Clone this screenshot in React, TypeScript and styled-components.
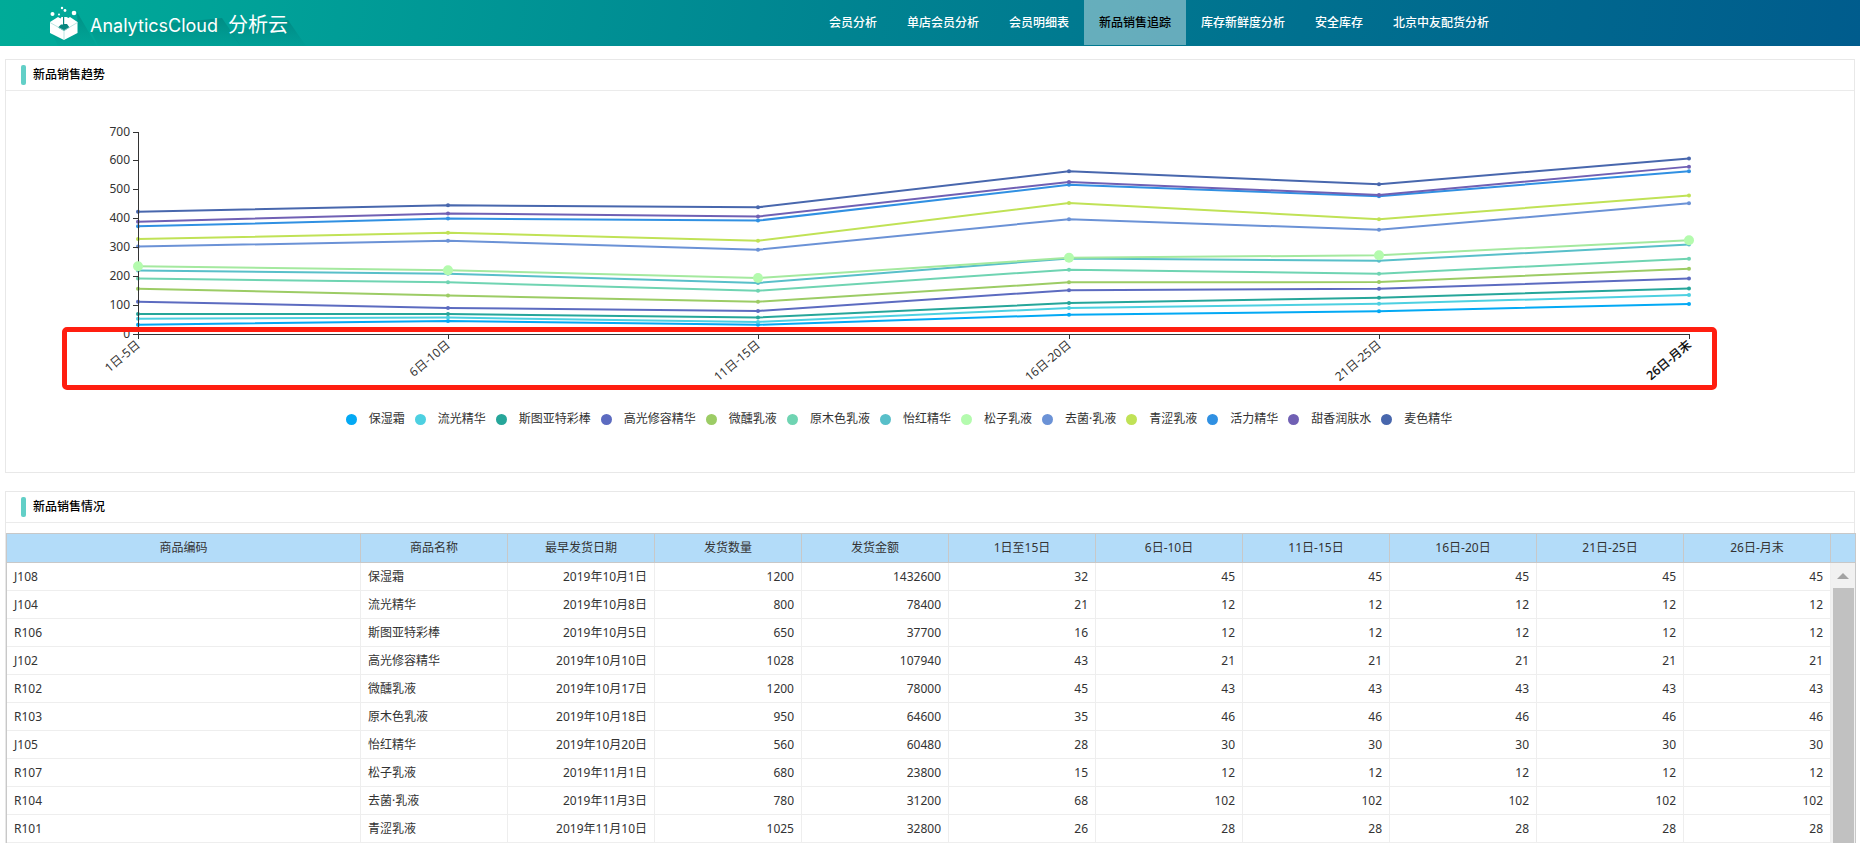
import React, { useLayoutEffect, useRef, useState } from "react";
import styled, { createGlobalStyle } from "styled-components";

const GlobalStyle = createGlobalStyle`
  * { box-sizing: border-box; }
  body {
    margin: 0;
    background: #fff;
    color: #333;
    font: 12px/16px "Noto Sans", "Noto Sans CJK SC", sans-serif;
  }
`;

const Header = styled.header`
  display: flex;
  justify-content: space-between;
  height: 46px;
  overflow: hidden;
  background: linear-gradient(100deg, #00ab98 0%, #00a198 14%, #008491 45%, #00708f 70%, #005c8d 100%);
`;

const Brand = styled.a`
  position: relative;
  display: flex;
  align-items: center;
  gap: 12px;
  padding-left: 50px;
  color: #fff;
  text-decoration: none;
  white-space: nowrap;
`;

const BrandShadow = styled.svg`
  position: absolute;
  top: 0;
  left: 0;
`;

const BrandMark = styled.svg`
  position: relative;
  flex: none;
`;

const BrandName = styled.span`
  position: relative;
  display: flex;
  align-items: baseline;
  gap: 10px;
  padding-top: 4px;
  font: 18px/24px Inter, "Noto Sans CJK SC", sans-serif;
`;

const BrandNameCn = styled.span`
  font-size: 20px;
`;

const Nav = styled.nav`
  display: flex;
  height: 45px;
  margin-right: 356px;
`;

const NavLink = styled.a<{ $active?: boolean }>`
  display: flex;
  align-items: center;
  padding: 0 15px;
  font-weight: 500;
  white-space: nowrap;
  text-decoration: none;
  color: ${(p) => (p.$active ? "#000" : "#fff")};
  background: ${(p) => (p.$active ? "rgba(255, 255, 255, 0.4)" : "transparent")};
`;

const Main = styled.main`
  display: flex;
  flex-direction: column;
  gap: 18px;
  padding: 13px 5px 0;
`;

const Panel = styled.section<{ $open?: boolean }>`
  border: 1px solid #e8e8e8;
  border-bottom-width: ${(p) => (p.$open ? 0 : 1)}px;
`;

const PanelTitle = styled.h2`
  display: flex;
  align-items: center;
  gap: 7px;
  height: 31px;
  margin: 0;
  padding-left: 15px;
  border-bottom: 1px solid #ebebeb;
  font-size: 12px;
  line-height: 18px;
  font-weight: 500;
  color: #000;

  &::before {
    content: "";
    width: 5px;
    height: 20px;
    border-radius: 2px;
    background: #62cfc7;
  }
`;

const ChartArea = styled.div`
  position: relative;
  height: 381px;
`;

const ChartSvg = styled.svg`
  display: block;
  width: 100%;
  height: 320px;
`;

const AxisText = styled.text<{ $strong?: boolean }>`
  font-size: 12px;
  fill: ${(p) => (p.$strong ? "#000" : "#333")};
  stroke: ${(p) => (p.$strong ? "#000" : "none")};
  stroke-width: 0.3;
  text-anchor: end;
`;

const Highlight = styled.div`
  position: absolute;
  top: 236px;
  left: 56px;
  right: 137px;
  height: 63px;
  border: 5px solid #ff1e10;
  border-radius: 5px;
`;

const Legend = styled.ul`
  display: flex;
  flex-wrap: wrap;
  justify-content: center;
  gap: 10px;
  margin: 0;
  padding: 0 62px 0 0;
  list-style: none;
`;

const LegendItem = styled.li<{ $color: string }>`
  display: flex;
  align-items: center;
  gap: 12px;
  white-space: nowrap;

  &::before {
    content: "";
    width: 11px;
    height: 11px;
    border-radius: 50%;
    background: ${(p) => p.$color};
  }
`;

const TableFrame = styled.div`
  margin: 10px -2px 0 0;
  border: 1px solid #c8c8c8;
  border-bottom: 0;
`;

const Table = styled.table`
  width: 100%;
  table-layout: fixed;
  border-collapse: separate;
  border-spacing: 0;
`;

const Col = styled.col<{ $width?: number }>`
  width: ${(p) => (p.$width ? `${p.$width}px` : "auto")};
`;

const HeadCell = styled.th`
  height: 29px;
  padding: 0 7px;
  border-right: 1px solid #c8c8c8;
  border-bottom: 1px solid #c8c8c8;
  background: #b3dcf9;
  font-weight: 400;
  text-align: center;

  &:last-child { border-right: 0; }
`;

const Cell = styled.td<{ $right?: boolean }>`
  height: 28px;
  padding: 0 7px;
  border-right: 1px solid #eee;
  border-bottom: 1px solid #eee;
  text-align: ${(p) => (p.$right ? "right" : "left")};
  white-space: nowrap;
`;

const ScrollCell = styled.td`
  height: 1px;
  padding: 0;
  background: #f1f1f1;
`;

const ScrollTrack = styled.div`
  display: flex;
  flex-direction: column;
  align-items: center;
  height: 280px;
`;

const ScrollArrow = styled.svg`
  flex: none;
  width: 24px;
  height: 25px;
`;

const ScrollThumb = styled.div`
  flex: 1;
  width: 21px;
  background: #c1c1c1;
`;

const navItems = ["会员分析", "单店会员分析", "会员明细表", "新品销售追踪", "库存新鲜度分析", "安全库存", "北京中友配货分析"];

const periods = ["1日-5日", "6日-10日", "11日-15日", "16日-20日", "21日-25日", "26日-月末"];

const series = [
  { name: "保湿霜", color: "#03a9f4", data: [32, 45, 32, 67, 79, 104] },
  { name: "流光精华", color: "#4dd0e1", data: [53, 57, 42, 90, 105, 135] },
  { name: "斯图亚特彩棒", color: "#26a69a", data: [69, 69, 57, 107, 126, 158] },
  { name: "高光修容精华", color: "#5c6bc0", data: [112, 90, 80, 152, 157, 192] },
  { name: "微醺乳液", color: "#9ccc65", data: [157, 133, 112, 179, 180, 226] },
  { name: "原木色乳液", color: "#6fd4b2", data: [192, 179, 150, 223, 209, 261] },
  { name: "怡红精华", color: "#58bfc9", data: [220, 209, 177, 262, 254, 310] },
  { name: "松子乳液", color: "#b4fbae", line: "#a4e99f", data: [235, 221, 194, 264, 273, 325] },
  { name: "去菌·乳液", color: "#6b92d6", data: [303, 323, 292, 398, 361, 453] },
  { name: "青涩乳液", color: "#c0e256", data: [329, 351, 323, 454, 398, 480] },
  { name: "活力精华", color: "#3090e2", data: [373, 400, 393, 517, 477, 564] },
  { name: "甜香润肤水", color: "#7060b4", data: [389, 418, 407, 527, 482, 580] },
  { name: "麦色精华", color: "#4867ad", data: [424, 446, 439, 564, 519, 608] },
];

const columns = ["商品编码", "商品名称", "最早发货日期", "发货数量", "发货金额", "1日至15日", "6日-10日", "11日-15日", "16日-20日", "21日-25日", "26日-月末"];

const rows: [string, string, string, number, number, number, number][] = [
  ["J108", "保湿霜", "2019年10月1日", 1200, 1432600, 32, 45],
  ["J104", "流光精华", "2019年10月8日", 800, 78400, 21, 12],
  ["R106", "斯图亚特彩棒", "2019年10月5日", 650, 37700, 16, 12],
  ["J102", "高光修容精华", "2019年10月10日", 1028, 107940, 43, 21],
  ["R102", "微醺乳液", "2019年10月17日", 1200, 78000, 45, 43],
  ["R103", "原木色乳液", "2019年10月18日", 950, 64600, 35, 46],
  ["J105", "怡红精华", "2019年10月20日", 560, 60480, 28, 30],
  ["R107", "松子乳液", "2019年11月1日", 680, 23800, 15, 12],
  ["R104", "去菌·乳液", "2019年11月3日", 780, 31200, 68, 102],
  ["R101", "青涩乳液", "2019年11月10日", 1025, 32800, 26, 28],
];

const PLOT = { left: 132, right: 165, top: 41, bottom: 243 };

function TrendChart() {
  const ref = useRef<SVGSVGElement>(null);
  const [width, setWidth] = useState(1848);

  useLayoutEffect(() => {
    const el = ref.current;
    if (!el) return;
    const update = () => setWidth(el.getBoundingClientRect().width);
    update();
    const observer = new ResizeObserver(update);
    observer.observe(el);
    return () => observer.disconnect();
  }, []);

  const end = width - PLOT.right;
  const x = (i: number) => Math.round(PLOT.left + ((end - PLOT.left) * i) / (periods.length - 1));
  const y = (v: number) => PLOT.bottom - (v * (PLOT.bottom - PLOT.top)) / 700;

  return (
    <ChartSvg ref={ref} role="img" aria-label="新品销售趋势">
      {series.map((s) => (
        <g key={s.name} fill={s.line ?? s.color}>
          <polyline
            points={s.data.map((v, i) => `${x(i)},${y(v)}`).join(" ")}
            fill="none"
            stroke={s.line ?? s.color}
            strokeWidth={2}
          />
          {s.data.map((v, i) => (
            <circle key={i} cx={x(i)} cy={y(v)} r={2} />
          ))}
        </g>
      ))}
      <g stroke="#333" shapeRendering="crispEdges">
        <line x1={x(0) + 0.5} x2={x(0) + 0.5} y1={PLOT.top} y2={PLOT.bottom} />
        <line x1={x(0)} x2={end + 1} y1={PLOT.bottom + 0.5} y2={PLOT.bottom + 0.5} />
        {[0, 1, 2, 3, 4, 5, 6, 7].map((n) => {
          const ty = Math.floor(y(n * 100)) + 0.5;
          return <line key={n} x1={x(0) - 5} x2={x(0)} y1={ty} y2={ty} />;
        })}
        {periods.map((p, i) => (
          <line key={p} x1={x(i) + 0.5} x2={x(i) + 0.5} y1={PLOT.bottom} y2={PLOT.bottom + 5} />
        ))}
      </g>
      {series[7].data.map((v, i) => (
        <circle key={i} cx={x(i)} cy={y(v)} r={5} fill="#b4fbae" />
      ))}
      {[0, 1, 2, 3, 4, 5, 6, 7].map((n) => (
        <AxisText key={n} x={x(0) - 8} y={Math.floor(y(n * 100)) + 4}>
          {n * 100}
        </AxisText>
      ))}
      {periods.map((p, i) => (
        <AxisText
          key={p}
          $strong={i === periods.length - 1}
          transform={`translate(${x(i) + 3} ${PLOT.bottom + 12}) rotate(-40)`}
        >
          {p}
        </AxisText>
      ))}
    </ChartSvg>
  );
}

function Logo() {
  return (
    <>
      <BrandShadow width="310" height="46" aria-hidden="true">
        <defs>
          <linearGradient id="fall" x1="0" y1="0" x2="0" y2="1">
            <stop offset="0" stopColor="#00706c" stopOpacity="0.45" />
            <stop offset="1" stopColor="#00807c" stopOpacity="0.06" />
          </linearGradient>
        </defs>
        <path d="M77 12 L97 46 H58 L52 33 L78 33Z" fill="url(#fall)" />
        <path d="M91 31 L222 18 L241 46 H98Z" fill="url(#fall)" />
        <path d="M230 31 L288 20 L306 46 H240Z" fill="url(#fall)" />
      </BrandShadow>
      <BrandMark width="28" height="34" viewBox="0 0 28 34" aria-hidden="true">
        <g fill="#fff">
          <circle cx="2.500" cy="8" r="2" />
          <circle cx="12" cy="2" r="1.200" />
          <circle cx="9" cy="8.500" r="1" />
          <circle cx="15" cy="4.500" r="1.400" />
          <circle cx="24" cy="7" r="2.300" />
          <path d="M0 16 L8 11 L10.500 12.500 L11.500 11 H16.500 L18.500 12 L20 11 L27.500 16 V27 L14 34 L0 27Z" />
        </g>
        <path d="M13 11 H14.200 V18 H17 L19.500 21.500 L14 25 L8 21.500 L11 18.500 H13Z" fill="#07877f" />
        <path d="M0 16.500 L14 24.500 L27.500 16.500 M14 24.500 V34" fill="none" stroke="#9edad4" strokeWidth="0.700" />
      </BrandMark>
    </>
  );
}

export default function App() {
  return (
    <>
      <GlobalStyle />
      <Header>
        <Brand href="#">
          <Logo />
          <BrandName>
            AnalyticsCloud <BrandNameCn>分析云</BrandNameCn>
          </BrandName>
        </Brand>
        <Nav>
          {navItems.map((item) => (
            <NavLink key={item} href="#" $active={item === "新品销售追踪"}>
              {item}
            </NavLink>
          ))}
        </Nav>
      </Header>
      <Main>
        <Panel>
          <PanelTitle>新品销售趋势</PanelTitle>
          <ChartArea>
            <TrendChart />
            <Highlight />
            <Legend>
              {series.map((s) => (
                <LegendItem key={s.name} $color={s.color}>
                  {s.name}
                </LegendItem>
              ))}
            </Legend>
          </ChartArea>
        </Panel>
        <Panel $open>
          <PanelTitle>新品销售情况</PanelTitle>
          <TableFrame>
            <Table>
              <colgroup>
                {columns.map((c, i) => (
                  <Col key={c} $width={i ? 147 : undefined} />
                ))}
                <Col $width={24} />
              </colgroup>
              <thead>
                <tr>
                  {columns.map((c) => (
                    <HeadCell key={c} scope="col">
                      {c}
                    </HeadCell>
                  ))}
                  <HeadCell aria-hidden="true" />
                </tr>
              </thead>
              <tbody>
                {rows.map((row, r) => {
                  const later = row[6];
                  const cells = [...row, later, later, later, later];
                  return (
                    <tr key={row[0]}>
                      {cells.map((value, i) => (
                        <Cell key={i} $right={i > 1}>
                          {value}
                        </Cell>
                      ))}
                      {r === 0 && (
                        <ScrollCell rowSpan={rows.length} aria-hidden="true">
                          <ScrollTrack>
                            <ScrollArrow viewBox="0 0 24 25">
                              <path d="M6 16 L12 10 L18 16Z" fill="#a3a3a3" />
                            </ScrollArrow>
                            <ScrollThumb />
                          </ScrollTrack>
                        </ScrollCell>
                      )}
                    </tr>
                  );
                })}
              </tbody>
            </Table>
          </TableFrame>
        </Panel>
      </Main>
    </>
  );
}
